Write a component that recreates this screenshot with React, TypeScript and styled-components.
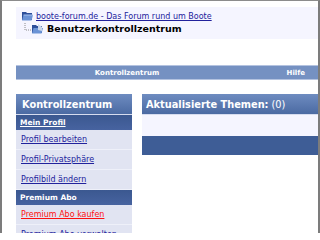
import React from 'react';
import styled, { createGlobalStyle } from 'styled-components';

const GlobalStyle = createGlobalStyle`
  html, body {
    margin: 0;
    padding: 0;
    background: #ffffff;
    font-family: "DejaVu Sans", Verdana, sans-serif;
  }
`;

const Frame = styled.div`
  box-sizing: border-box;
  height: 233px;
  overflow: hidden;
  border-top: 1px solid #8c8c8c;
  border-left: 2px solid #7c7c7c;
  border-right: 2px solid #7c7c7c;
  padding: 6px 0 0 14px;
  background: #ffffff;
`;

const Header = styled.div`
  height: 32px;
  background: #f5f5ff;
  padding: 3px 0 0 5px;
  box-sizing: border-box;
  display: flex;
  flex-direction: column;
`;

const NavLine = styled.div<{ indent?: number }>`
  display: flex;
  align-items: center;
  height: 12px;
  padding-left: ${(p) => p.indent ?? 0}px;
`;

const SiteLink = styled.a`
  color: #22229c;
  font-size: 8px;
  margin-left: 3px;
  white-space: nowrap;
`;

const PageTitle = styled.span`
  color: #000000;
  font-size: 9.5px;
  font-weight: bold;
  margin-left: 3px;
  white-space: nowrap;
`;

const NavBar = styled.div`
  margin-top: 26px;
  height: 15px;
  box-sizing: border-box;
  background: #7591c2;
  border-top: 1px solid #b4c3e0;
  border-bottom: 1px solid #b4c3e0;
  display: flex;
  align-items: center;
  color: #ffffff;
  font-size: 7px;
  font-weight: bold;
`;

const NavCell = styled.div<{ align?: string }>`
  flex: ${(p) => (p.align === 'right' ? 1 : '0 0 222px')};
  text-align: ${(p) => (p.align === 'right' ? 'right' : 'center')};
  padding-right: ${(p) => (p.align === 'right' ? '13px' : '0')};
`;

const Columns = styled.div`
  margin-top: 14px;
  display: flex;
  gap: 10px;
`;

const Sidebar = styled.div`
  width: 116px;
  flex: 0 0 116px;
  display: flex;
  flex-direction: column;
`;

const PanelHead = styled.div<{ inset?: number }>`
  height: 21px;
  box-sizing: border-box;
  background: linear-gradient(#6e8cc0, #4b6aa2);
  color: #ffffff;
  font-size: 9.8px;
  font-weight: bold;
  display: flex;
  align-items: center;
  padding-left: ${(p) => p.inset ?? 6}px;
  white-space: nowrap;
  border-bottom: 1px solid #d6dcef;
`;

const Category = styled.div`
  height: 15px;
  box-sizing: border-box;
  background: linear-gradient(#3b5890, #4763a0);
  color: #ffffff;
  font-size: 7.5px;
  font-weight: bold;
  display: flex;
  align-items: center;
  padding-left: 4px;
`;

const CategoryLink = styled.a`
  color: #ffffff;
`;

const Item = styled.div`
  height: 20px;
  box-sizing: border-box;
  background: #e1e4f2;
  border-bottom: 1px solid #eef0f9;
  display: flex;
  align-items: center;
  padding-left: 5px;
  font-size: 8px;
`;

const ItemLink = styled.a<{ highlight?: boolean }>`
  color: ${(p) => (p.highlight ? '#ff1010' : '#22229c')};
  white-space: nowrap;
`;

const Main = styled.div`
  flex: 1;
  display: flex;
  flex-direction: column;
`;

const Muted = styled.span`
  font-weight: normal;
  margin-left: 3px;
`;

const EmptyRow = styled.div`
  height: 21px;
  background: #f5f5ff;
`;

const FooterBar = styled.div`
  height: 19px;
  background: #3e5d96;
`;

const Folder = () => (
  <svg width="12" height="10" viewBox="0 0 12 10">
    <path d="M1 1h4l1 1h5v7H1z" fill="#2d4f9a" />
    <path d="M2.5 4h9.5l-1.5 5.5H1z" fill="#6b93d6" />
    <path d="M2.5 4h9.5" stroke="#a9c3ef" strokeWidth="1" />
  </svg>
);

const TreeFolder = () => (
  <svg width="20" height="11" viewBox="0 0 20 11">
    <path d="M1 0v7h6" stroke="#8a8a8a" strokeWidth="1" strokeDasharray="1 1" fill="none" />
    <path d="M8 2h4l1 1h5v7H8z" fill="#2d4f9a" />
    <path d="M9.5 5h9.5l-1.5 5.5H8z" fill="#6b93d6" />
    <path d="M14 1l4 3v4l-4-1z" fill="#c9d6ea" />
  </svg>
);

export default function App() {
  return (
    <>
      <GlobalStyle />
      <Frame>
        <Header>
          <NavLine>
            <Folder />
            <SiteLink href="#">boote-forum.de - Das Forum rund um Boote</SiteLink>
          </NavLine>
          <NavLine indent={3}>
            <TreeFolder />
            <PageTitle>Benutzerkontrollzentrum</PageTitle>
          </NavLine>
        </Header>
        <NavBar>
          <NavCell>Kontrollzentrum</NavCell>
          <NavCell align="right">Hilfe</NavCell>
        </NavBar>
        <Columns>
          <Sidebar>
            <PanelHead>Kontrollzentrum</PanelHead>
            <Category>
              <CategoryLink href="#">Mein Profil</CategoryLink>
            </Category>
            <Item>
              <ItemLink href="#">Profil bearbeiten</ItemLink>
            </Item>
            <Item>
              <ItemLink href="#">Profil-Privatsphäre</ItemLink>
            </Item>
            <Item>
              <ItemLink href="#">Profilbild ändern</ItemLink>
            </Item>
            <Category>Premium Abo</Category>
            <Item>
              <ItemLink href="#" highlight>
                Premium Abo kaufen
              </ItemLink>
            </Item>
            <Item>
              <ItemLink href="#">Premium Abo verwalten</ItemLink>
            </Item>
          </Sidebar>
          <Main>
            <PanelHead inset={4}>
              Aktualisierte Themen:<Muted>(0)</Muted>
            </PanelHead>
            <EmptyRow />
            <FooterBar />
          </Main>
        </Columns>
      </Frame>
    </>
  );
}
